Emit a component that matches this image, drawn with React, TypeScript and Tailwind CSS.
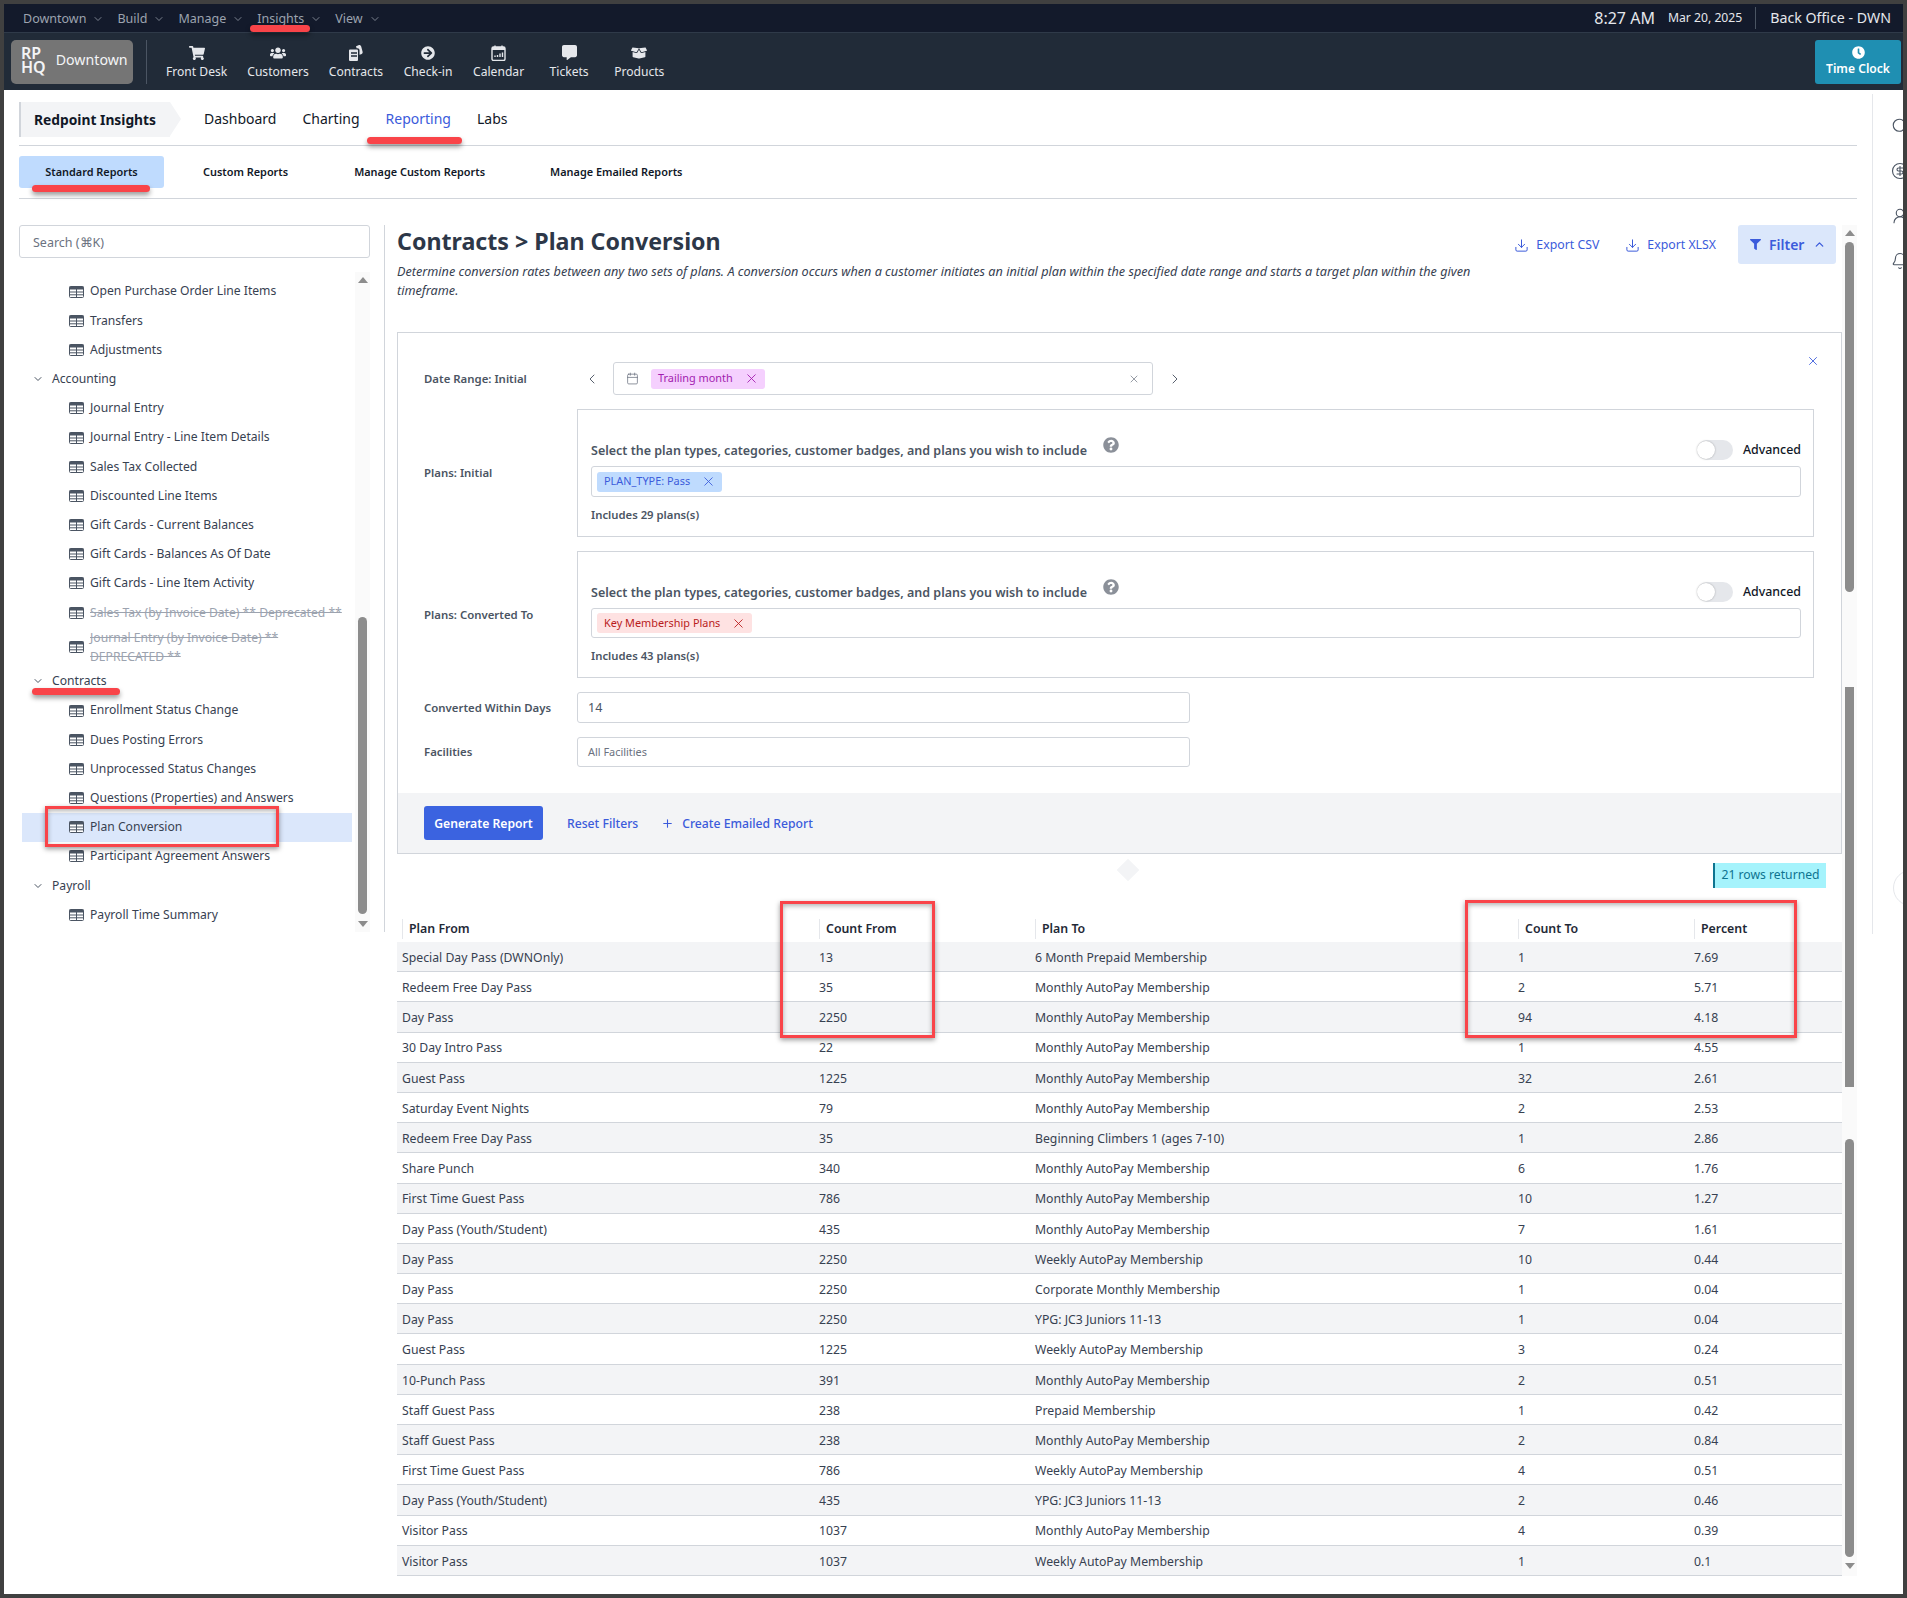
import React from 'react';
import { Calendar, ChevronDown, ChevronLeft, ChevronRight, ChevronUp, CircleDollarSign, Bell, Download, Plus, Search, UserRound, X } from 'lucide-react';
import { FaArrowCircleRight, FaClock, FaCommentAlt, FaFilter, FaQuestionCircle, FaShoppingCart, FaUsers, FaBoxOpen } from 'react-icons/fa';

const rows: [string, string, string, string, string][] = [
  ['Special Day Pass (DWNOnly)', '13', '6 Month Prepaid Membership', '1', '7.69'],
  ['Redeem Free Day Pass', '35', 'Monthly AutoPay Membership', '2', '5.71'],
  ['Day Pass', '2250', 'Monthly AutoPay Membership', '94', '4.18'],
  ['30 Day Intro Pass', '22', 'Monthly AutoPay Membership', '1', '4.55'],
  ['Guest Pass', '1225', 'Monthly AutoPay Membership', '32', '2.61'],
  ['Saturday Event Nights', '79', 'Monthly AutoPay Membership', '2', '2.53'],
  ['Redeem Free Day Pass', '35', 'Beginning Climbers 1 (ages 7-10)', '1', '2.86'],
  ['Share Punch', '340', 'Monthly AutoPay Membership', '6', '1.76'],
  ['First Time Guest Pass', '786', 'Monthly AutoPay Membership', '10', '1.27'],
  ['Day Pass (Youth/Student)', '435', 'Monthly AutoPay Membership', '7', '1.61'],
  ['Day Pass', '2250', 'Weekly AutoPay Membership', '10', '0.44'],
  ['Day Pass', '2250', 'Corporate Monthly Membership', '1', '0.04'],
  ['Day Pass', '2250', 'YPG: JC3 Juniors 11-13', '1', '0.04'],
  ['Guest Pass', '1225', 'Weekly AutoPay Membership', '3', '0.24'],
  ['10-Punch Pass', '391', 'Monthly AutoPay Membership', '2', '0.51'],
  ['Staff Guest Pass', '238', 'Prepaid Membership', '1', '0.42'],
  ['Staff Guest Pass', '238', 'Monthly AutoPay Membership', '2', '0.84'],
  ['First Time Guest Pass', '786', 'Weekly AutoPay Membership', '4', '0.51'],
  ['Day Pass (Youth/Student)', '435', 'YPG: JC3 Juniors 11-13', '2', '0.46'],
  ['Visitor Pass', '1037', 'Monthly AutoPay Membership', '4', '0.39'],
  ['Visitor Pass', '1037', 'Weekly AutoPay Membership', '1', '0.1'],
];

type Item = { label: string; group?: boolean; old?: boolean; active?: boolean; tall?: boolean };

const items: Item[] = [
  { label: 'Open Purchase Order Line Items' },
  { label: 'Transfers' },
  { label: 'Adjustments' },
  { label: 'Accounting', group: true },
  { label: 'Journal Entry' },
  { label: 'Journal Entry - Line Item Details' },
  { label: 'Sales Tax Collected' },
  { label: 'Discounted Line Items' },
  { label: 'Gift Cards - Current Balances' },
  { label: 'Gift Cards - Balances As Of Date' },
  { label: 'Gift Cards - Line Item Activity' },
  { label: 'Sales Tax (by Invoice Date) ** Deprecated **', old: true },
  { label: 'Journal Entry (by Invoice Date) ** DEPRECATED **', old: true, tall: true },
  { label: 'Contracts', group: true },
  { label: 'Enrollment Status Change' },
  { label: 'Dues Posting Errors' },
  { label: 'Unprocessed Status Changes' },
  { label: 'Questions (Properties) and Answers' },
  { label: 'Plan Conversion', active: true },
  { label: 'Participant Agreement Answers' },
  { label: 'Payroll', group: true },
  { label: 'Payroll Time Summary' },
];

function TableIcon() {
  return (
    <svg width="15" height="12" viewBox="0 0 15 12" className="shrink-0">
      <rect x="0.5" y="0.5" width="14" height="11" rx="1" fill="#fff" stroke="#4b5563" />
      <rect x="0.5" y="0.5" width="14" height="3" fill="#4b5563" />
      <path d="M7.5 3v8.5M1 6h13M1 8.8h13" stroke="#4b5563" strokeWidth="1" />
    </svg>
  );
}

function ContractsIcon() {
  return (
    <svg width="15" height="16" viewBox="0 0 15 16" fill="#e5e7eb">
      <path d="M1 5.5a1 1 0 0 1 1-1h7a1 1 0 0 1 1 1V15a1 1 0 0 1-1 1H2a1 1 0 0 1-1-1z" />
      <path d="M3 8h6M3 11h6" stroke="#212b38" strokeWidth="1.3" />
      <path d="M8 1.2 10.5.2c1.2-.4 2.3.2 2.7 1.3l1.4 5.2c.3 1.2-.4 2.2-1.5 2.6l-1.6.5V5.2c0-1.2-.8-2-2-2H8.6z" />
    </svg>
  );
}

function CalendarIcon() {
  return (
    <svg width="15" height="16" viewBox="0 0 15 16">
      <rect x="1" y="2" width="13" height="13.5" rx="1.5" fill="none" stroke="#e5e7eb" strokeWidth="1.4" />
      <rect x="1" y="2" width="13" height="3" fill="#e5e7eb" />
      <path d="M4 0.5v2.5M11 0.5v2.5" stroke="#e5e7eb" strokeWidth="1.4" />
      <path d="M4 12v-1.5M6.5 12V10M9 12V8.5M11.5 12V7.5" stroke="#e5e7eb" strokeWidth="1.4" />
    </svg>
  );
}

function MenuItem({ label }: { label: string }) {
  return (
    <div className="flex items-center gap-[6px] text-[12.5px] text-[#9ca3af]">
      <span>{label}</span>
      <ChevronDown size={12} strokeWidth={1.5} />
    </div>
  );
}

function NavItem({ icon, label }: { icon: React.ReactNode; label: string }) {
  return (
    <div className="flex min-w-[50px] flex-col items-center text-[12.1px] leading-[18px] text-[#e5e7eb]">
      <div className="flex h-[20px] items-center">{icon}</div>
      <span>{label}</span>
    </div>
  );
}

function Chip({ label, className, iconClass }: { label: string; className: string; iconClass: string }) {
  return (
    <span className={`flex h-[20px] items-center rounded-[3px] pl-[7px] pr-[6px] text-[10.9px] ${className}`}>
      {label}
      <X size={15} strokeWidth={1.4} className={`ml-[11px] ${iconClass}`} />
    </span>
  );
}

function PlanBox({ chip, count, inputClass }: { chip: React.ReactNode; count: number; inputClass: string }) {
  return (
    <div className="w-[1237px] border border-[#d1d5db] pb-[12px] pl-[13px] pr-[12px] pt-[30px]">
      <div className="flex h-[20px] items-center">
        <span className="relative top-[1px] text-[12.5px] font-semibold text-[#4b5563]">Select the plan types, categories, customer badges, and plans you wish to include</span>
        <FaQuestionCircle size={16} className="relative -top-[5px] ml-[16px] text-[#8b9099]" />
        <div className="ml-auto flex items-center gap-[10px]">
          <div className="flex h-[20px] w-[36px] items-center rounded-full bg-[#e5e7eb]">
            <div className="h-[18px] w-[18px] rounded-full bg-white shadow-[0_0_2px_rgba(0,0,0,0.3)]" />
          </div>
          <span className="text-[12.4px] font-medium text-[#111827]">Advanced</span>
        </div>
      </div>
      <div className={`mt-[6px] flex items-center rounded-[3px] border border-[#d1d5db] pl-[5px] ${inputClass}`}>{chip}</div>
      <div className="mt-[9px] text-[11.3px] font-semibold leading-[18px] text-[#4b5563]">Includes {count} plans(s)</div>
    </div>
  );
}

function FormLabel({ children }: { children: React.ReactNode }) {
  return <div className="w-[179px] shrink-0 pl-[26px] text-[11.4px] font-semibold text-[#4b5563]">{children}</div>;
}

function HeaderCell({ label }: { label: string }) {
  return (
    <div className="flex h-[20px] items-center border-l border-[#e5e7eb] pl-[6px] text-[12.35px] font-semibold text-[#1f2937]">{label}</div>
  );
}

export default function App() {
  return (
    <div className="relative flex h-[1598px] w-[1907px] flex-col overflow-hidden border-4 border-[#404040] bg-white font-['Noto_Sans',sans-serif]">
      {/* top menu */}
      <div className="flex h-[29px] shrink-0 items-center border-b border-[#2f3a49] bg-[#131a2b]">
        <div className="flex items-center gap-[13px] pl-[19px] pt-[2px]">
          <MenuItem label="Downtown" />
          <MenuItem label="Build" />
          <MenuItem label="Manage" />
          <MenuItem label="Insights" />
          <MenuItem label="View" />
        </div>
        <div className="ml-auto flex items-center pr-[12px] text-[#e5e7eb]">
          <span className="text-[16px]">8:27 AM</span>
          <span className="ml-[13px] text-[12.2px]">Mar 20, 2025</span>
          <div className="ml-[13px] h-[22px] w-px bg-[#4b5563]" />
          <span className="ml-[14px] text-[14.2px]">Back Office - DWN</span>
        </div>
      </div>

      {/* app nav */}
      <div className="flex h-[57px] shrink-0 items-center bg-[#212b38]">
        <div className="ml-[7px] flex h-[44px] w-[122px] items-center rounded-[5px] bg-[#757575] pb-[3px] pl-[10px] text-[#f3f4f6]">
          <div className="text-[16px] font-semibold leading-[14px]">
            RP
            <br />
            HQ
          </div>
          <span className="ml-[10px] text-[14.2px]">Downtown</span>
        </div>
        <div className="ml-[13px] h-[44px] w-px bg-[#4b5563]" />
        <div className="ml-[19px] flex items-center gap-[20px]">
          <NavItem label="Front Desk" icon={<FaShoppingCart size={16} />} />
          <NavItem label="Customers" icon={<FaUsers size={16} />} />
          <NavItem label="Contracts" icon={<ContractsIcon />} />
          <NavItem label="Check-in" icon={<FaArrowCircleRight size={14} />} />
          <NavItem label="Calendar" icon={<CalendarIcon />} />
          <NavItem label="Tickets" icon={<FaCommentAlt size={15} />} />
          <NavItem label="Products" icon={<FaBoxOpen size={16} />} />
        </div>
        <div className="ml-auto mr-[2px] flex h-[44px] w-[86px] flex-col items-center justify-center rounded-[3px] bg-[#1f8fb2] text-white">
          <FaClock size={13} />
          <span className="mt-[2px] text-[12.1px] font-semibold leading-[16px]">Time Clock</span>
        </div>
      </div>

      <div className="flex min-h-0 flex-1">
        {/* page */}
        <div className="flex w-[1853px] shrink-0 flex-col pl-[15px]">
          {/* tabs */}
          <div className="mt-[12px] flex h-[44px] shrink-0 border-b border-[#d1d5db] pb-[8px]">
            <div className="flex h-[35px] w-[151px] items-center border-l-2 border-[#d1d5db] bg-[#f3f4f6] pl-[13px] pt-[1px] text-[13.8px] font-bold text-[#111827]">
              Redpoint Insights
            </div>
            <div className="h-0 w-0 border-y-[17.5px] border-l-[11px] border-y-transparent border-l-[#f3f4f6]" />
            <div className="ml-[23px] flex h-[33px] items-center gap-[26px] text-[14px] text-[#111827]">
              <span>Dashboard</span>
              <span>Charting</span>
              <span className="text-[#3b5bdb]">Reporting</span>
              <span>Labs</span>
            </div>
          </div>

          {/* sub tabs */}
          <div className="flex h-[53px] shrink-0 border-b border-[#d1d5db] pt-[10px] text-[10.9px] font-semibold text-[#111827]">
            <div className="flex h-[32px] w-[145px] items-center justify-center rounded-[3px] bg-[#bfdbfe]">Standard Reports</div>
            <div className="ml-[39px] flex h-[32px] items-center">Custom Reports</div>
            <div className="ml-[66px] flex h-[32px] items-center">Manage Custom Reports</div>
            <div className="ml-[65px] flex h-[32px] items-center">Manage Emailed Reports</div>
          </div>

          <div className="mt-[26px] flex min-h-0 flex-1">
            {/* report list */}
            <div className="flex h-[707px] w-[366px] shrink-0 flex-col border-r border-[#d1d5db] pr-[14px]">
              <div className="flex h-[33px] shrink-0 items-center rounded-[3px] border border-[#d1d5db] pl-[13px] pt-[3px] text-[12.5px] text-[#6b7280]">
                Search (⌘K)
              </div>
              <div className="mt-[14px] flex min-h-0 flex-1">
                <div className="w-[336px] shrink-0 pl-[3px] pr-[3px] pt-[5px]">
                  {items.map((item) =>
                    item.group ? (
                      <div key={item.label} className="flex h-[29.2px] items-center pl-[10px] text-[12.15px] text-[#374151]">
                        <ChevronDown size={12} strokeWidth={2} className="text-[#4b5563]" />
                        <span className="ml-[8px]">{item.label}</span>
                      </div>
                    ) : (
                      <div
                        key={item.label}
                        className={`flex items-center pl-[47px] text-[12.15px] ${item.tall ? 'h-[39.5px] leading-[19px]' : 'h-[29.2px]'} ${item.active ? 'bg-[#dbe7fb]' : ''} ${item.old ? 'text-[#9ca3af] line-through' : 'text-[#374151]'}`}
                      >
                        <TableIcon />
                        <span className={item.tall ? 'ml-[6px] w-[210px]' : 'ml-[6px]'}>{item.label}</span>
                      </div>
                    )
                  )}
                </div>
                <div className="flex w-[15px] flex-col items-center bg-[#fafafa]">
                  <div className="mt-[5px] h-0 w-0 border-x-[5px] border-b-[6px] border-x-transparent border-b-[#8c8c8c]" />
                  <div className="mt-[334px] h-[297px] w-[9px] rounded-full bg-[#8c8c8c]" />
                  <div className="mt-[7px] h-0 w-0 border-x-[5px] border-t-[6px] border-x-transparent border-t-[#8c8c8c]" />
                </div>
              </div>
            </div>

            {/* report */}
            <div className="w-[1457px] shrink-0 pl-[12px]">
              <div className="flex h-[107px] items-start justify-between">
                <div className="w-[1090px]">
                  <h1 className="text-[23.2px] font-bold leading-[32px] text-[#2d3748]">Contracts &gt; Plan Conversion</h1>
                  <p className="mt-[5px] text-[12.65px] italic leading-[19px] text-[#374151]">
                    Determine conversion rates between any two sets of plans. A conversion occurs when a customer initiates an initial plan within the specified date range and starts a target plan within the given timeframe.
                  </p>
                </div>
                <div className="flex items-center pr-[6px]">
                  <span className="flex items-center gap-[7px] pt-[2px] text-[12.3px] text-[#3b5bdb]">
                    <Download size={15} strokeWidth={1.6} />
                    Export CSV
                  </span>
                  <span className="ml-[26px] flex items-center gap-[7px] pt-[2px] text-[12.3px] text-[#3b5bdb]">
                    <Download size={15} strokeWidth={1.6} />
                    Export XLSX
                  </span>
                  <div className="ml-[22px] flex h-[39px] w-[98px] items-center rounded-[3px] bg-[#dbe7fb] pl-[12px] text-[14px] font-semibold text-[#3b5bdb]">
                    <FaFilter size={11} />
                    <span className="ml-[8px]">Filter</span>
                    <ChevronUp size={13} strokeWidth={2.4} className="ml-[9px]" />
                  </div>
                </div>
              </div>

              {/* filters */}
              <div className="relative flex h-[522px] flex-col border border-[#d1d5db]">
                <X size={14} strokeWidth={1.5} className="absolute left-[1408px] top-[21px] text-[#3b5bdb]" />
                <div className="flex flex-col gap-[14px] pt-[29px]">
                  <div className="flex h-[33px] items-center">
                    <FormLabel>Date Range: Initial</FormLabel>
                    <ChevronLeft size={16} strokeWidth={1.4} className="ml-[7px] text-[#4b5563]" />
                    <div className="ml-[13px] flex h-[33px] w-[540px] items-center rounded-[3px] border border-[#d1d5db] pl-[12px] pr-[12px]">
                      <Calendar size={13} strokeWidth={1.4} className="text-[#6b7280]" />
                      <span className="ml-[12px]">
                        <Chip label="Trailing month" className="bg-[#f5d0fe] text-[#a21caf]" iconClass="text-[#a21caf]" />
                      </span>
                      <X size={12} strokeWidth={1.4} className="ml-auto text-[#6b7280]" />
                    </div>
                    <ChevronRight size={16} strokeWidth={1.4} className="ml-[14px] text-[#4b5563]" />
                  </div>

                  <div className="flex items-center">
                    <FormLabel>Plans: Initial</FormLabel>
                    <PlanBox count={29} inputClass="h-[31px]" chip={<Chip label="PLAN_TYPE: Pass" className="bg-[#bfdbfe] text-[#3b5bdb]" iconClass="text-[#3b5bdb]" />} />
                  </div>

                  <div className="flex items-center">
                    <FormLabel>Plans: Converted To</FormLabel>
                    <PlanBox count={43} inputClass="h-[30px]" chip={<Chip label="Key Membership Plans" className="bg-[#fee2e2] text-[#b91c1c]" iconClass="text-[#b91c1c]" />} />
                  </div>

                  <div className="flex items-center">
                    <FormLabel>Converted Within Days</FormLabel>
                    <div className="flex h-[31px] w-[613px] items-center rounded-[3px] border border-[#d1d5db] pl-[10px] pt-[2px] text-[12.5px] text-[#4b5563]">14</div>
                  </div>

                  <div className="flex items-center">
                    <FormLabel>Facilities</FormLabel>
                    <div className="flex h-[30px] w-[613px] items-center rounded-[3px] border border-[#d1d5db] pl-[10px] text-[10.9px] text-[#6b7280]">All Facilities</div>
                  </div>
                </div>
                <div className="mt-auto flex h-[60px] items-center bg-[#f3f4f6] pl-[26px] text-[12.2px] font-medium text-[#3b5bdb]">
                  <div className="flex h-[34px] w-[119px] items-center justify-center rounded-[3px] bg-[#3b63e0] pt-[2px] font-semibold text-white">Generate Report</div>
                  <span className="ml-[24px] pt-[2px]">Reset Filters</span>
                  <Plus size={13} strokeWidth={2} className="ml-[23px]" />
                  <span className="ml-[8px] pt-[2px]">Create Emailed Report</span>
                </div>
              </div>

              {/* rows returned */}
              <div className="relative flex h-[46px] items-start justify-end pr-[16px] pt-[9px]">
                <div className="absolute left-[723px] top-[8px] h-[16px] w-[16px] rotate-45 bg-[#f3f4f6]" />
                <div className="flex h-[25px] w-[113px] items-center justify-center border-l-2 border-[#0e7490] bg-[#a5f3fc] text-[12.2px] text-[#0e7490]">
                  21 rows returned
                </div>
              </div>

              {/* results */}
              <div className="grid h-[42px] grid-cols-[422px_216px_483px_176px_1fr] items-end pb-[3px]">
                <div className="pl-[5px]">
                  <HeaderCell label="Plan From" />
                </div>
                <HeaderCell label="Count From" />
                <HeaderCell label="Plan To" />
                <HeaderCell label="Count To" />
                <HeaderCell label="Percent" />
              </div>
              {rows.map((row, i) => (
                <div
                  key={i}
                  className={`grid h-[30.2px] grid-cols-[422px_216px_483px_176px_1fr] items-center border-b border-[#d1d5db] pt-[3px] text-[12.25px] text-[#374151] ${i % 2 === 0 ? 'bg-[#f3f4f6]' : 'bg-white'}`}
                >
                  <div className="pl-[5px]">{row[0]}</div>
                  <div>{row[1]}</div>
                  <div>{row[2]}</div>
                  <div>{row[3]}</div>
                  <div>{row[4]}</div>
                </div>
              ))}
            </div>

            {/* page scrollbar */}
            <div className="mb-[18px] flex w-[15px] shrink-0 flex-col items-center bg-[#fafafa]">
              <div className="mt-[5px] h-0 w-0 border-x-[5px] border-b-[6px] border-x-transparent border-b-[#8c8c8c]" />
              <div className="mt-[6px] h-[350px] w-[9px] rounded-full bg-[#8c8c8c]" />
              <div className="mt-[95px] h-[400px] w-[9px] bg-[#8c8c8c]" />
              <div className="mt-[52px] h-[418px] w-[9px] rounded-full bg-[#8c8c8c]" />
              <div className="mt-[6px] h-0 w-0 border-x-[5px] border-t-[6px] border-x-transparent border-t-[#8c8c8c]" />
            </div>
          </div>
        </div>

        {/* right rail, cut off by the window edge */}
        <div className="relative mb-[660px] mt-[4px] ml-[15px] w-[31px] shrink-0 overflow-hidden border-l border-[#e5e7eb] text-[#4b5563]">
          <div className="flex flex-col gap-[27px] pl-[18px] pt-[23px]">
            <Search size={18} strokeWidth={1.5} />
            <CircleDollarSign size={18} strokeWidth={1.5} />
            <UserRound size={18} strokeWidth={1.5} />
            <Bell size={18} strokeWidth={1.5} />
          </div>
          <div className="absolute left-[20px] top-[776px] h-[36px] w-[36px] rounded-full border border-[#e5e7eb] bg-white" />
        </div>
      </div>

      {/* red annotations drawn over the screenshot */}
      <div className="absolute left-[246px] top-[21px] h-[7px] w-[60px] rounded-full bg-[#f94449] shadow-[0_3px_5px_rgba(0,0,0,0.4)]" />
      <div className="absolute left-[363px] top-[133px] h-[7px] w-[95px] rounded-full bg-[#f94449] shadow-[0_3px_5px_rgba(0,0,0,0.4)]" />
      <div className="absolute left-[28px] top-[181px] h-[7px] w-[118px] rounded-full bg-[#f94449] shadow-[0_3px_5px_rgba(0,0,0,0.4)]" />
      <div className="absolute left-[28px] top-[684px] h-[7px] w-[88px] rounded-full bg-[#f94449] shadow-[0_3px_5px_rgba(0,0,0,0.4)]" />
      <div className="absolute left-[41px] top-[802px] h-[41px] w-[234px] border-[3px] border-[#f94449] shadow-[0_2px_5px_rgba(0,0,0,0.4),inset_0_2px_5px_rgba(0,0,0,0.3)]" />
      <div className="absolute left-[776px] top-[897px] h-[137px] w-[155px] border-[3px] border-[#f94449] shadow-[0_2px_5px_rgba(0,0,0,0.4),inset_0_2px_5px_rgba(0,0,0,0.3)]" />
      <div className="absolute left-[1461px] top-[896px] h-[138px] w-[332px] border-[3px] border-[#f94449] shadow-[0_2px_5px_rgba(0,0,0,0.4),inset_0_2px_5px_rgba(0,0,0,0.3)]" />
    </div>
  );
}
